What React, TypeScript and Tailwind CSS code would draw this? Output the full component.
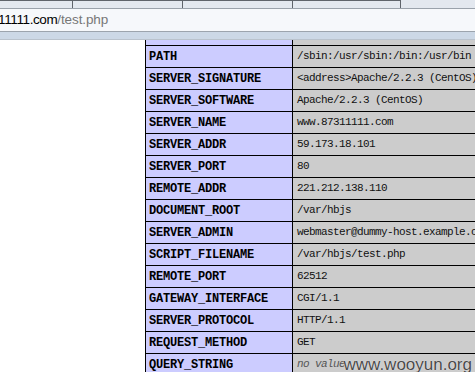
import React from "react";

const rows: [string, string, boolean?][] = [
  ["PATH", "/sbin:/usr/sbin:/bin:/usr/bin"],
  ["SERVER_SIGNATURE", "<address>Apache/2.2.3 (CentOS) Server at www.87311111.com Port 80</address>"],
  ["SERVER_SOFTWARE", "Apache/2.2.3 (CentOS)"],
  ["SERVER_NAME", "www.87311111.com"],
  ["SERVER_ADDR", "59.173.18.101"],
  ["SERVER_PORT", "80"],
  ["REMOTE_ADDR", "221.212.138.110"],
  ["DOCUMENT_ROOT", "/var/hbjs"],
  ["SERVER_ADMIN", "webmaster@dummy-host.example.com"],
  ["SCRIPT_FILENAME", "/var/hbjs/test.php"],
  ["REMOTE_PORT", "62512"],
  ["GATEWAY_INTERFACE", "CGI/1.1"],
  ["SERVER_PROTOCOL", "HTTP/1.1"],
  ["REQUEST_METHOD", "GET"],
  ["QUERY_STRING", "no value", true],
];

export default function App() {
  return (
    <div className="relative w-[475px] h-[372px] overflow-hidden bg-white">
      {/* top tab strip */}
      <div className="flex h-[9px] bg-[#e3e8ef] border-b border-[#9aa2ab]">
        <div className="w-[73px] border-r border-t border-[#5f646b]" />
        <div className="w-[110px] border-r border-t border-[#5f646b]" />
        <div className="w-[110px] border-r border-t border-[#5f646b]" />
        <div className="w-[108px] border-r border-t border-[#5f646b]" />
      </div>
      {/* address bar */}
      <div className="h-[23px] bg-[#f6f8fb] border-b border-[#9ca4ad] flex items-center overflow-hidden">
        <div
          className="whitespace-nowrap text-[13.5px] -ml-[9px] shrink-0"
          style={{ fontFamily: '"Liberation Sans", Arial, sans-serif' }}
        >
          <span className="text-[#000] tracking-[-0.4px]">311111.com</span>
          <span className="text-[#777] tracking-[-0.1px]">/test.php</span>
        </div>
      </div>
      {/* blue band */}
      <div className="h-[8px] bg-[#ccd8e6] border-b border-[#b9c2cc]" />
      {/* table */}
      <div className="pl-[145px]">
        <div className="flex h-[6px] border-b border-black">
          <div className="w-[148px] shrink-0 bg-[#ccccff] border-l border-r border-black" />
          <div className="flex-1 bg-[#cccccc]" />
        </div>
        {rows.map(([k, v, italic]) => (
          <div key={k} className="flex h-[22px] border-b border-black">
            <div
              className="w-[148px] shrink-0 bg-[#ccccff] border-l border-r border-black flex items-center pl-[3px] font-bold text-[12px] tracking-[-0.2px] text-black whitespace-nowrap overflow-hidden"
              style={{ fontFamily: '"Liberation Mono", monospace' }}
            >
              {k}
            </div>
            <div
              className={`flex-1 bg-[#cccccc] flex items-center pl-[4px] text-[11px] tracking-[-0.6px] whitespace-nowrap overflow-hidden ${
                italic ? "italic text-[#555]" : "text-[#111]"
              }`}
              style={{ fontFamily: '"Liberation Mono", monospace' }}
            >
              {v}
            </div>
          </div>
        ))}
      </div>
      {/* watermark */}
      <div
        className="absolute right-[3px] bottom-[-1px] text-[17px] text-[#4a4a4a] leading-none"
        style={{ fontFamily: '"Liberation Sans", Arial, sans-serif', textShadow: "0 0 1px #fff" }}
      >
        www.wooyun.org
      </div>
    </div>
  );
}
